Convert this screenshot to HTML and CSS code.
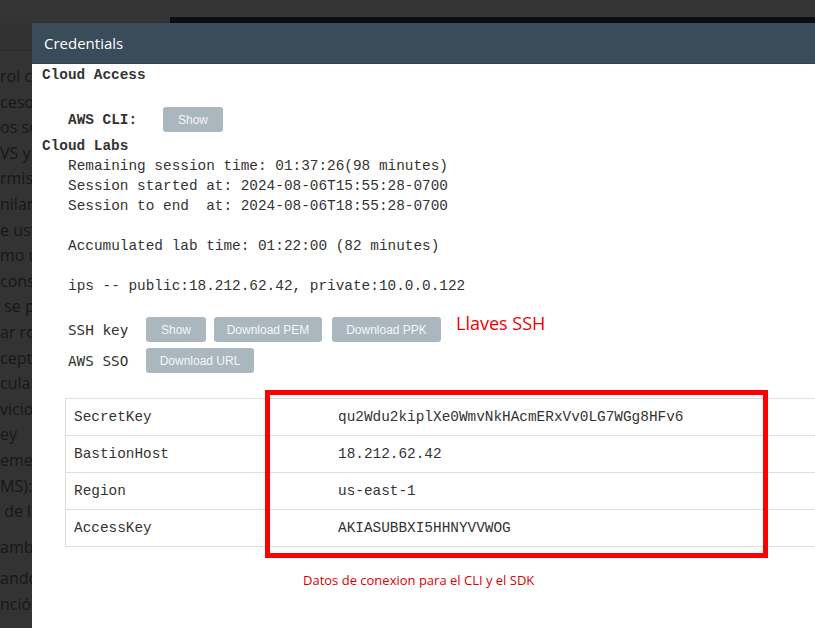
FILE: index.html
```html
<!DOCTYPE html>
<html>
<head>
<meta charset="utf-8">
<link rel="stylesheet" href="styles.css">
</head>
<body>
<div class="page">
  <div class="topbar"></div>
  <div class="subbar"><div class="subbar-left"></div><div class="subbar-right"></div></div>
  <div class="tabline"></div>
  <div class="bgtext">
    <p class="ln">rol co</p>
    <p class="ln">ceso </p>
    <p class="ln">os se</p>
    <p class="ln">VS y t</p>
    <p class="ln">rmiso</p>
    <p class="ln">nilare</p>
    <p class="ln">e ust</p>
    <p class="ln">mo u</p>
    <p class="ln">consi</p>
    <p class="ln"> se p</p>
    <p class="ln">ar ro</p>
    <p class="ln">cepto</p>
    <p class="ln">cula</p>
    <p class="ln">vicio</p>
    <p class="ln">ey</p>
    <p class="ln">eme</p>
    <p class="ln">MS):</p>
    <p class="ln"> de li</p>
    <p class="ln gap1">ambo</p>
    <p class="ln gap2">ando</p>
    <p class="ln">nción</p>
  </div>

  <div class="modal">
    <div class="modal-header">Credentials</div>
    <div class="modal-body">
      <div class="h">Cloud Access</div>
      <div class="cli-row">
        <span class="h cli-label">AWS CLI:</span>
        <span class="btn w60">Show</span>
      </div>
      <div class="h">Cloud Labs</div>
      <pre class="info">Remaining session time: 01:37:26(98 minutes)
Session started at: 2024-08-06T15:55:28-0700
Session to end  at: 2024-08-06T18:55:28-0700

Accumulated lab time: 01:22:00 (82 minutes)

ips -- public:18.212.62.42, private:10.0.0.122</pre>
      <div class="key-row ssh">
        <span class="key-label">SSH key</span>
        <span class="btn w60">Show</span>
        <span class="btn w108">Download PEM</span>
        <span class="btn w109 gap10">Download PPK</span>
        <span class="note-ssh">Llaves SSH</span>
      </div>
      <div class="key-row sso">
        <span class="key-label">AWS SSO</span>
        <span class="btn w108">Download URL</span>
      </div>
      <table class="creds">
        <tr><td class="k">SecretKey</td><td class="v">qu2Wdu2kiplXe0WmvNkHAcmERxVv0LG7WGg8HFv6</td></tr>
        <tr><td class="k">BastionHost</td><td class="v">18.212.62.42</td></tr>
        <tr><td class="k">Region</td><td class="v">us-east-1</td></tr>
        <tr><td class="k">AccessKey</td><td class="v">AKIASUBBXI5HHNYVVWOG</td></tr>
      </table>
      <div class="note-sdk">Datos de conexion para el CLI y el SDK</div>
      <div class="redbox"></div>
    </div>
  </div>
</div>
</body>
</html>
```

FILE: styles.css
```css
html, body {
  margin: 0;
  padding: 0;
  width: 815px;
  height: 628px;
  overflow: hidden;
  background: #333333;
}

.page {
  position: relative;
  width: 815px;
  height: 628px;
  overflow: hidden;
  background: #333333;
}

.topbar {
  height: 17px;
  background: #353535;
}

.subbar {
  display: flex;
  height: 6px;
}
.subbar-left {
  width: 170px;
  background: #343434;
}
.subbar-right {
  flex: 1;
  background: #0b0e11;
}

.tabline {
  width: 112px;
  height: 27px;
  background: #323232;
  border-bottom: 1px solid #282828;
}

.bgtext {
  padding-top: 13px;
  font-family: "Open Sans", sans-serif;
  font-size: 16px;
  color: #171717;
}
.ln {
  margin: 0;
  height: 25.6px;
  line-height: 25.6px;
  white-space: pre;
}
.gap1 { margin-top: 10px; }
.gap2 { margin-top: 6px; }

.modal {
  position: absolute;
  left: 32px;
  top: 23px;
  width: 840px;
  height: 620px;
  background: #ffffff;
}

.modal-header {
  height: 40px;
  background: #3a4b5a;
  border-bottom: 1px solid #34434f;
  color: #ffffff;
  font-family: "Open Sans", sans-serif;
  font-size: 15px;
  line-height: 40px;
  padding-left: 12px;
}

.modal-body {
  position: relative;
  padding-top: 1px;
  padding-left: 10px;
  color: #333333;
  font-family: "Liberation Mono", monospace;
  font-size: 14.4px;
}

.h {
  font-weight: bold;
  line-height: 20px;
  height: 20px;
}

.cli-row {
  display: flex;
  align-items: center;
  margin-top: 22px;
  height: 25px;
  margin-bottom: 4px;
  padding-left: 26px;
}
.cli-label {
  width: 95px;
}

.btn {
  display: inline-flex;
  align-items: center;
  justify-content: center;
  height: 25px;
  background: #abb7bf;
  color: #f4f6f8;
  border-radius: 3px;
  font-family: "Liberation Sans", Arial, sans-serif;
  font-size: 12px;
  margin-right: 8px;
}
.w60 { width: 60px; }
.w108 { width: 108px; }
.w109 { width: 109px; }
.gap10 { margin-left: 2px; }

.info {
  margin: 0;
  padding-left: 26px;
  font-family: "Liberation Mono", monospace;
  font-size: 14.4px;
  line-height: 20px;
  color: #333333;
}

.key-row {
  display: flex;
  align-items: center;
  padding-left: 26px;
  height: 25px;
}
.ssh { margin-top: 21px; }
.sso { margin-top: 6px; }
.key-label {
  width: 78px;
  font-family: "DejaVu Sans Mono", monospace;
  font-size: 14.3px;
  color: #333333;
}
.note-ssh {
  margin-left: 7px;
  margin-top: -13px;
  font-family: "Open Sans", sans-serif;
  font-size: 18px;
  color: #ee0000;
}

.creds {
  margin-top: 25px;
  margin-left: 23px;
  width: 800px;
  border-collapse: collapse;
  border-left: 1px solid #dddddd;
  border-top: 1px solid #dddddd;
}
.creds td {
  height: 36px;
  padding: 0 8px;
  border-bottom: 1px solid #dddddd;
  font-family: "Liberation Mono", monospace;
  font-size: 14.4px;
  color: #333333;
  white-space: nowrap;
}
.creds td.k { width: 248px; }

.note-sdk {
  margin-top: 24px;
  margin-left: 261px;
  font-family: "Open Sans", sans-serif;
  font-size: 13px;
  color: #dd0000;
}

.redbox {
  position: absolute;
  left: 233px;
  top: 326px;
  width: 493px;
  height: 158px;
  border: 5px solid #ff0000;
}
```
